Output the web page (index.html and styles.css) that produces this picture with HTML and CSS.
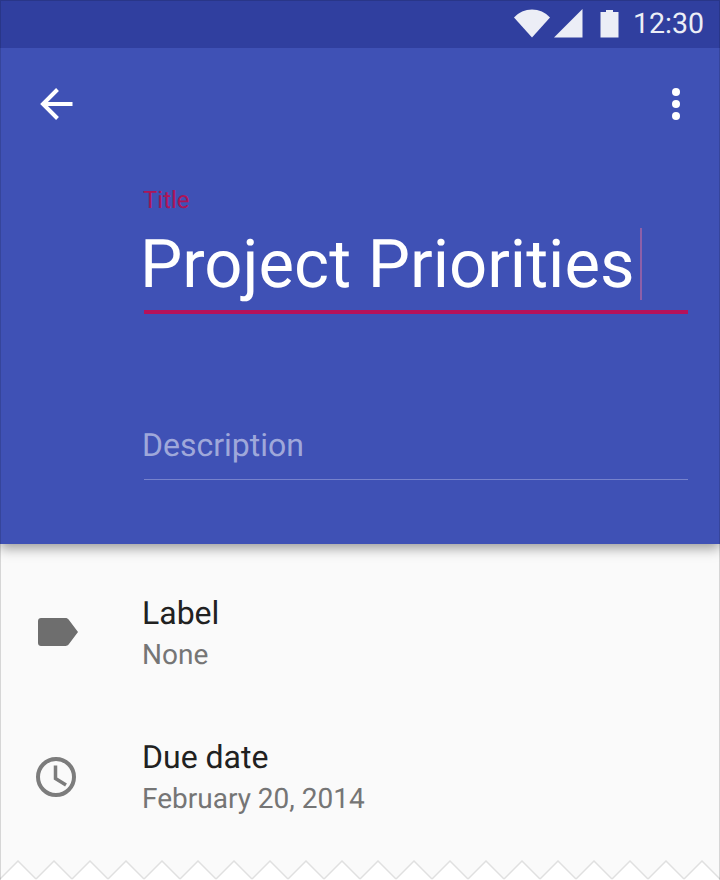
FILE: index.html
```html
<!DOCTYPE html>
<html lang="en">
<head>
<meta charset="utf-8">
<title>Project Priorities</title>
<link rel="stylesheet" href="styles.css">
</head>
<body>
<div class="frame">
  <header class="hero">
    <div class="status">
      <svg class="st-wifi" width="36" height="29" viewBox="0 0 36 29"><path d="M0 8.500C4.800 3.300 11 .5 18 .5S31.200 3.300 36 8.500L18 28.500Z"/></svg>
      <svg class="st-signal" width="29" height="29" viewBox="0 0 29 29"><path d="M0 28.500L28.500 0V28.500Z"/></svg>
      <svg class="st-batt" width="19" height="29" viewBox="0 0 19 29"><path d="M6 1H13V3H18.500V28.500H.5V3H6Z"/></svg>
      <span class="clock">12:30</span>
    </div>
    <div class="toolbar">
      <svg width="36" height="36" viewBox="0 0 36 36" class="ic-back"><path d="M34.500 18H5M19.500 3.500L5 18L19.500 32.500" fill="none" stroke="#fff" stroke-width="4"/></svg>
      <svg width="10" height="34" viewBox="0 0 10 34" class="ic-more"><circle cx="5" cy="5" r="4"/><circle cx="5" cy="17" r="4"/><circle cx="5" cy="29" r="4"/></svg>
    </div>
    <div class="fields">
      <div class="title-label">Title</div>
      <div class="title-field"><span class="title-text">Project Priorities</span><span class="caret"></span></div>
      <div class="desc-field">Description</div>
    </div>
  </header>
  <main class="list">
    <div class="row">
      <svg class="row-icon row-icon-label" width="42" height="30" viewBox="0 0 42 30"><path d="M4 1H28.500C29.800 1 31 1.600 31.800 2.700L41 15L31.800 27.300C31 28.400 29.800 29 28.500 29L4 29C2.300 29 1 27.700 1 26V4C1 2.300 2.300 1 4 1Z"/></svg>
      <div class="row-text"><div class="row-title">Label</div><div class="row-sub">None</div></div>
    </div>
    <div class="row">
      <svg class="row-icon row-icon-clock" width="42" height="42" viewBox="0 0 42 42"><circle cx="21" cy="21" r="18" fill="none" stroke="#7c7c7c" stroke-width="4"/><path d="M20.500 9.500V22.500L31 29" fill="none" stroke="#7c7c7c" stroke-width="3.500"/></svg>
      <div class="row-text"><div class="row-title">Due date</div><div class="row-sub">February 20, 2014</div></div>
    </div>
  </main>
  <svg class="zigzag" width="720" height="20" viewBox="0 0 720 20">
    <defs><pattern id="zz" width="36" height="20" patternUnits="userSpaceOnUse"><path d="M0 19L18 1L36 19V20H0Z" fill="#fff"/><path d="M0 19L18 1L36 19" fill="none" stroke="#e0e0e0" stroke-width="1.500"/></pattern></defs>
    <rect width="720" height="20" fill="url(#zz)"/>
  </svg>
</div>
</body>
</html>
```
FILE: styles.css
```css
* { box-sizing: border-box; }
html, body { margin: 0; padding: 0; }
body { width: 720px; height: 880px; overflow: hidden; background: #fafafa; font-family: Roboto, "Liberation Sans", sans-serif; text-rendering: geometricPrecision; }
.frame { position: relative; width: 720px; height: 880px; display: flex; flex-direction: column; background: #fafafa; }
.frame::after { content: ""; position: absolute; inset: 0; border: 1px solid rgba(0,0,0,.14); border-bottom: 0; pointer-events: none; z-index: 2; }
.hero { height: 544px; background: #3f51b5; box-shadow: 0 4px 12px rgba(0,0,0,.4); display: flex; flex-direction: column; flex: none; position: relative; z-index: 1; }
.status { height: 48px; background: #303f9f; display: flex; align-items: flex-start; justify-content: flex-end; padding: 9px 16px 0 0; color: #eceef6; flex: none; }
.status svg { fill: #eceef6; display: block; }
.st-wifi { margin-right: 4px; }
.st-signal { margin-right: 17px; }
.st-batt { margin-right: 14px; }
.clock { font-size: 28.500px; line-height: 30px; }
.toolbar { height: 112px; display: flex; justify-content: space-between; align-items: flex-start; padding: 38px 39px 0 38px; flex: none; }
.ic-more { fill: #fff; margin-top: 1px; }
.fields { margin: 0 32px 0 144px; display: flex; flex-direction: column; }
.title-label { color: #ad1457; font-size: 24px; line-height: 28px; margin-top: 26px; margin-left: -1px; }
.title-field { height: 102px; border-bottom: 4px solid #b5125a; display: flex; align-items: flex-start; margin-top: -2px; }
.title-text { color: #fff; font-size: 67px; line-height: 76px; margin-left: -4px; margin-top: 15px; white-space: nowrap; }
.caret { width: 2px; height: 72px; background: #8e5fa8; margin-left: 5px; margin-top: 16px; }
.desc-field { margin-top: 112px; height: 54px; color: #9fa8da; font-size: 32px; line-height: 38px; text-indent: -2px; border-bottom: 1px solid #7682cc; }
.list { flex: 1; padding-top: 35px; display: flex; flex-direction: column; gap: 36px; }
.row { display: flex; align-items: center; height: 108px; position: relative; }
.row-icon { fill: #6e6e6e; flex: none; margin-left: 37px; }
.row-icon-label { margin-top: -2px; }
.row-icon-clock { margin-left: 35px; }
.row-text { position: absolute; left: 142px; }
.row-title { color: #212121; font-size: 32px; line-height: 44px; }
.row-sub { color: #757575; font-size: 28px; line-height: 40px; }
.zigzag { display: block; flex: none; }
```
